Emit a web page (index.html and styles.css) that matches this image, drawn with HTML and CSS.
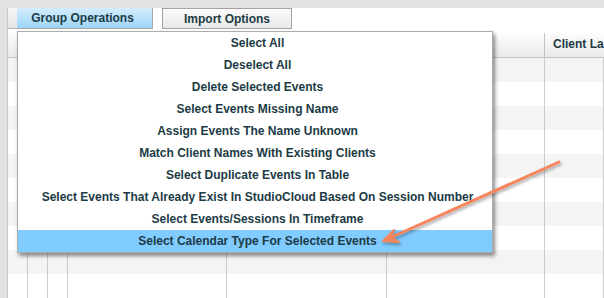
FILE: index.html
```html
<!DOCTYPE html>
<html>
<head>
<meta charset="utf-8">
<link rel="stylesheet" href="styles.css">
</head>
<body>
<div class="topbar"></div>
<div class="main">
  <div class="leftstrip"></div>
  <div class="content">
    <div class="toolbar">
      <div class="tb-stub"></div>
      <div class="btn btn-active">Group Operations</div>
      <div class="btn btn-plain">Import Options</div>
    </div>
    <div class="spacer"></div>
    <div class="grid">
      <div class="hc"></div><div class="hc"></div><div class="hc"></div><div class="hc"></div><div class="hc"></div><div class="hc"></div><div class="hc hc-text">Client Last Name</div>
      <div class="row odd"><div></div><div></div><div></div><div></div><div></div><div></div><div></div></div>
      <div class="row"><div></div><div></div><div></div><div></div><div></div><div></div><div></div></div>
      <div class="row odd"><div></div><div></div><div></div><div></div><div></div><div></div><div></div></div>
      <div class="row"><div></div><div></div><div></div><div></div><div></div><div></div><div></div></div>
      <div class="row odd"><div></div><div></div><div></div><div></div><div></div><div></div><div></div></div>
      <div class="row"><div></div><div></div><div></div><div></div><div></div><div></div><div></div></div>
      <div class="row odd"><div></div><div></div><div></div><div></div><div></div><div></div><div></div></div>
      <div class="row"><div></div><div></div><div></div><div></div><div></div><div></div><div></div></div>
      <div class="row odd"><div></div><div></div><div></div><div></div><div></div><div></div><div></div></div>
      <div class="row"><div></div><div></div><div></div><div></div><div></div><div></div><div></div></div>
    </div>
  </div>
</div>

<ul class="menu">
  <li>Select All</li>
  <li>Deselect All</li>
  <li>Delete Selected Events</li>
  <li>Select Events Missing Name</li>
  <li>Assign Events The Name Unknown</li>
  <li>Match Client Names With Existing Clients</li>
  <li>Select Duplicate Events In Table</li>
  <li>Select Events That Already Exist In StudioCloud Based On Session Number</li>
  <li>Select Events/Sessions In Timeframe</li>
  <li class="hl">Select Calendar Type For Selected Events</li>
</ul>

<svg class="arrow" width="604" height="298" viewBox="0 0 604 298">
  <defs>
    <filter id="sh" x="-20%" y="-20%" width="140%" height="140%">
      <feDropShadow dx="1" dy="2" stdDeviation="1.5" flood-color="#000" flood-opacity="0.35"/>
    </filter>
  </defs>
  <g filter="url(#sh)" stroke="#f4855c" fill="#f4855c" stroke-linecap="round" stroke-linejoin="round">
    <line x1="559" y1="162" x2="392" y2="237" stroke-width="3"/>
    <path d="M383 241 L394 230 L391 237 L399 242 Z" stroke-width="2"/>
  </g>
</svg>
</body>
</html>
```

FILE: styles.css
```css
html, body {
  margin: 0;
  padding: 0;
  width: 604px;
  height: 298px;
  overflow: hidden;
  background: #ffffff;
  font-family: "Liberation Sans", Arial, sans-serif;
}

.topbar {
  height: 8px;
  background: #e2e2e2;
}

.main {
  display: flex;
  height: 290px;
}

.leftstrip {
  width: 7px;
  background: #e2e2e2;
  border-right: 1px solid #c6c6c6;
  flex: none;
}

.content {
  flex: 1;
  display: flex;
  flex-direction: column;
  min-width: 0;
}

.toolbar {
  display: flex;
  height: 22px;
  align-items: stretch;
}

.tb-stub {
  width: 9px;
  background: linear-gradient(#f6f6f6, #e4e4e4);
  border-bottom: 1px solid #b8b8b8;
  box-sizing: border-box;
}

.btn {
  box-sizing: border-box;
  font-size: 12px;
  font-weight: bold;
  color: #1c3b45;
  display: flex;
  align-items: center;
  justify-content: center;
}

.btn-active {
  width: 136px;
  padding-right: 4px;
  background: linear-gradient(#d3ecfc, #9dd5f8);
  border-right: 1px solid #a9a9a9;
  border-bottom: 1px solid #a9a9a9;
}

.btn-plain {
  width: 130px;
  margin-left: 9px;
  height: 21px;
  background: linear-gradient(#fbfbfb, #e8e8e8);
  border: 1px solid #a3a3a3;
}

.spacer {
  height: 6px;
}

.grid {
  display: grid;
  grid-template-columns: 20px 20px 20px 159px 160px 158px 1fr;
  grid-template-rows: 25px;
  grid-auto-rows: 24px;
}

.hc {
  height: 25px;
  box-sizing: border-box;
  background: linear-gradient(#fdfdfd, #e9e9e9);
  border-right: 1px solid #c4c4c4;
  border-bottom: 1px solid #c4c4c4;
}

.hc-text {
  font-size: 12px;
  font-weight: bold;
  color: #1c3b45;
  padding-left: 8px;
  line-height: 23px;
  white-space: nowrap;
  overflow: hidden;
  border-right: none;
}

.row {
  display: contents;
}

.row > div {
  border-right: 1px solid #cccccc;
  background: #ffffff;
}

.row.odd > div {
  background: #f4f4f4;
}

.menu {
  position: absolute;
  left: 17px;
  top: 31px;
  width: 476px;
  margin: 0;
  padding: 0 0 0 5px;
  list-style: none;
  background: #ffffff;
  border: 1px solid #acacac;
  box-sizing: border-box;
  box-shadow: 2px 3px 4px rgba(0, 0, 0, 0.45);
}

.menu li {
  height: 22px;
  line-height: 22px;
  text-align: center;
  font-size: 12px;
  font-weight: bold;
  color: #1c3b45;
  white-space: nowrap;
}

.menu li.hl {
  background: #80cbff;
  margin-left: -5px;
  padding-left: 5px;
}

.arrow {
  position: absolute;
  left: 0;
  top: 0;
  pointer-events: none;
}
```
